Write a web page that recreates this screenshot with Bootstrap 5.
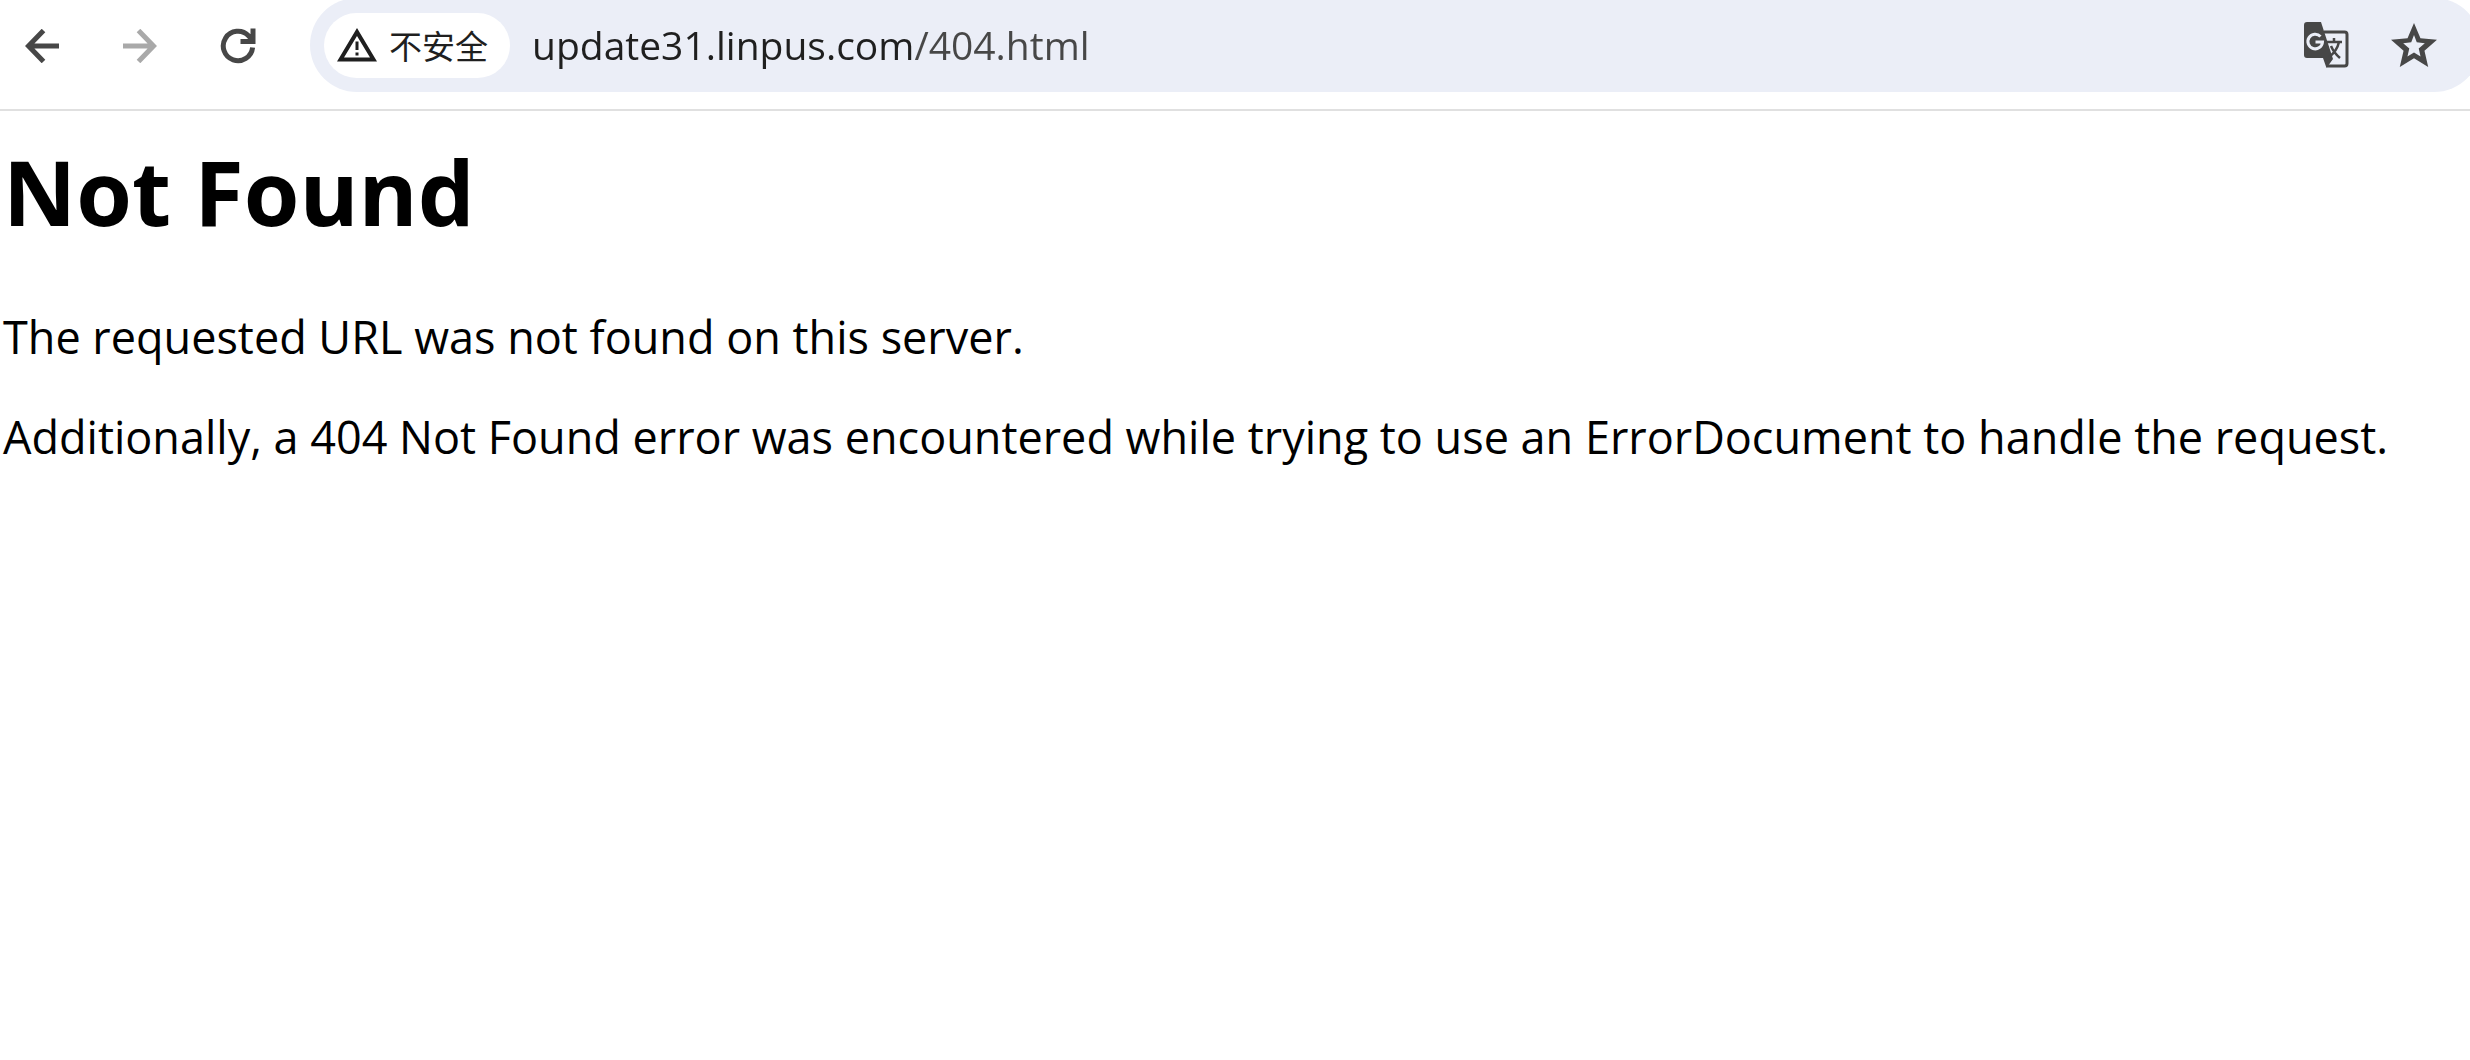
<!DOCTYPE html>
<html lang="zh-CN">
<head>
<meta charset="utf-8">
<meta name="viewport" content="width=device-width, initial-scale=1">
<title>404 Not Found</title>
<link href="https://cdn.jsdelivr.net/npm/bootstrap@5.3.0/dist/css/bootstrap.min.css" rel="stylesheet">
<style>
  body { font-family: "Open Sans", "Noto Sans CJK SC", sans-serif; color: #000; background: #fff; }
  .toolbar { height: 111px; border-bottom: 2px solid #e0e0e0; padding-left: 12px; gap: 38px; overflow: hidden; }
  .tool-btn { width: 60px; height: 92px; color: #474747; border: 0; }
  .tool-btn:disabled { color: #a9a9a9; opacity: 1; border: 0; }
  /* the address bar runs past the right edge of the window */
  .omnibox { height: 94px; margin: -2px -11px 0 4px; padding: 2px 44px 2px 14px; background: #ebeef7; border-radius: 47px; }
  .site-chip { height: 65px; padding: 0 22px 0 13px; gap: 12px; font-family: "Noto Sans CJK SC", sans-serif; font-size: 33px; font-weight: 400; line-height: 40px; color: #1f1f1f; background: #fff; border: 0; }
  .url-box { font-size: 39px; line-height: 56px; padding: 0; margin-left: 22px; border: 0; outline: 0; color: #1f1f1f;
    background: linear-gradient(90deg, #1f1f1f 381px, #474747 381px); -webkit-background-clip: text; background-clip: text; -webkit-text-fill-color: transparent; }
  .omni-actions { gap: 41px; }
  .omni-btn { color: #474747; border: 0; width: 46px; height: 60px; }
  .error-page { padding: 18px 3px; }
  .error-page h1 { font-size: 90px; line-height: 124px; font-weight: 700; margin-bottom: 52px; }
  .error-page p { font-size: 45px; line-height: 64px; margin-bottom: 36px; }
</style>
</head>
<body>
<header class="toolbar d-flex align-items-start">
  <button type="button" class="tool-btn btn p-0 d-flex align-items-center justify-content-center" aria-label="Back">
    <svg width="34" height="34" viewBox="0 0 34 34" fill="none" stroke="currentColor" stroke-width="5"><path d="M34 17H4M18.500 1.500 3.500 17 18.500 32.500"/></svg>
  </button>
  <button type="button" class="tool-btn btn p-0 d-flex align-items-center justify-content-center" aria-label="Forward" disabled>
    <svg width="34" height="34" viewBox="0 0 34 34" fill="none" stroke="currentColor" stroke-width="5"><path d="M0 17H30M15.500 1.500 30.500 17 15.500 32.500"/></svg>
  </button>
  <button type="button" class="tool-btn btn p-0 d-flex align-items-center justify-content-center" aria-label="Reload">
    <svg width="36" height="36" viewBox="0 0 36 36" fill="none" stroke="currentColor" stroke-width="5"><path d="M32.600 19.500A14.700 14.700 0 1 1 28.500 7.700L33 12.500M33 .5V13.500H20.500"/></svg>
  </button>
  <div class="omnibox d-flex flex-grow-1 align-items-center">
    <button type="button" class="site-chip btn rounded-pill d-flex align-items-center flex-shrink-0">
      <svg width="40" height="34" viewBox="0 0 40 34" fill="currentColor"><path fill-rule="evenodd" d="M20 0 40 33.500H0ZM20 8 7 29.500H33Z"/><path d="M18.500 13.500h3v8.500h-3zM18.500 24.500h3v3h-3z"/></svg>
      <span>不安全</span>
    </button>
    <input type="text" class="url-box flex-grow-1" aria-label="Address" value="update31.linpus.com/404.html" spellcheck="false">
    <div class="omni-actions d-flex">
      <button type="button" class="omni-btn btn p-0 d-flex align-items-center" aria-label="Translate this page">
        <svg width="46" height="46" viewBox="0 0 46 46"><path fill="none" stroke="currentColor" stroke-width="3" d="M20 10H40.500Q43 10 43 12.500V41.500Q43 44 40.500 44H23"/><path fill="currentColor" d="M3 0H17L29 37 22.500 46 19 36H3Q0 36 0 33V3Q0 0 3 0Z"/><path fill="none" stroke="#ebeef7" stroke-width="3" d="M16.500 14.500A7.300 7.300 0 1 0 18.500 20H11.500"/><path fill="none" stroke="currentColor" stroke-width="2.500" d="M22 20H38M30 16V20M35 20Q33 29 25 35M27 24Q30 31 36 36"/></svg>
      </button>
      <button type="button" class="omni-btn btn p-0 d-flex align-items-center" aria-label="Bookmark this page">
        <svg width="46" height="44" viewBox="2 2 20 19" fill="currentColor" preserveAspectRatio="none"><path fill-rule="evenodd" d="M22 9.240l-7.190-.62L12 2 9.190 8.630 2 9.240l5.460 4.730L5.820 21 12 17.270 18.180 21l-1.630-7.030zM12 7.200l1.200 3.150 3.500.35-2.650 2.350.8 3.450L12 14.700 9.150 16.500l.8-3.450L7.300 10.700l3.500-.35z"/></svg>
      </button>
    </div>
  </div>
</header>
<main class="error-page">
  <h1>Not Found</h1>
  <p>The requested URL was not found on this server.</p>
  <p>Additionally, a 404 Not Found error was encountered while trying to use an ErrorDocument to handle the request.</p>
</main>
<script src="https://cdn.jsdelivr.net/npm/bootstrap@5.3.0/dist/js/bootstrap.bundle.min.js"></script>
</body>
</html>
